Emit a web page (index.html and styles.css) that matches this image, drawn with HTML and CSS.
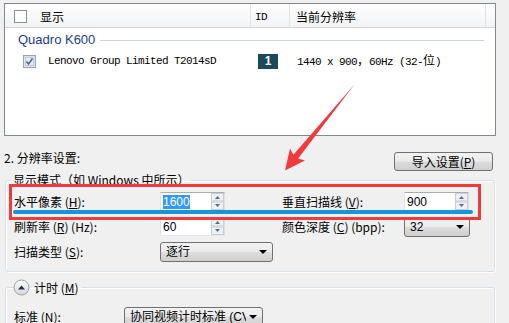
FILE: index.html
```html
<!DOCTYPE html>
<html>
<head>
<meta charset="utf-8">
<link rel="stylesheet" href="styles.css">
</head>
<body>
<div class="page">
  <div class="list">
    <div class="list-head">
      <div class="hcol c1"><span class="cb"></span><span class="htext">显示</span></div>
      <div class="hcol c2"><span class="mono">ID</span></div>
      <div class="hcol c3">当前分辨率</div>
      <div class="hcol c4"></div>
    </div>
    <div class="group"><span class="gname">Quadro K600</span><span class="gline"></span></div>
    <div class="row">
      <div class="c1 rc1">
        <svg class="cbx" width="13" height="13" viewBox="0 0 13 13"><rect x="0.5" y="0.5" width="12" height="12" fill="#dfe5ee" stroke="#9aa3b2"/><rect x="2.5" y="2.5" width="8" height="8" fill="#e9edf3" stroke="#c3cad6"/><path d="M3.5 6.5 L5.5 9 L9.5 3.5" fill="none" stroke="#4a64a0" stroke-width="1.6"/></svg>
        <span class="mono">Lenovo Group Limited T2014sD</span>
      </div>
      <div class="c2 rc2"><span class="badge">1</span></div>
      <div class="c3 rc3"><span class="mono">1440 x 900</span><span>，</span><span class="mono">60Hz (32-</span><span>位</span><span class="mono">)</span></div>
    </div>
  </div>

  <div class="sec2">
    <span class="sec2-label">2. 分辨率设置:</span>
    <div class="btn">导入设置(<u>P</u>)</div>
  </div>

  <fieldset class="box box1">
    <legend class="lg1">显示模式（如 Windows 中所示）</legend>
    <div class="grid">
      <div class="lbl">水平像素 (<u>H</u>):</div>
      <div class="spin"><span class="val"><span class="hl">1600</span></span><span class="arr"><svg width="13" height="17" viewBox="0 0 13 17"><rect x="0.5" y="0.5" width="12" height="7.5" fill="#eef0f3" stroke="#c9ccd2"/><rect x="0.5" y="9" width="12" height="7.5" fill="#eef0f3" stroke="#c9ccd2"/><path d="M4 6 L6.5 3 L9 6 Z" fill="#5a6c8c"/><path d="M4 11 L6.5 14 L9 11 Z" fill="#5a6c8c"/></svg></span></div>
      <div class="lbl">垂直扫描线 (<u>V</u>):</div>
      <div class="spin"><span class="val">900</span><span class="arr"><svg width="13" height="17" viewBox="0 0 13 17"><rect x="0.5" y="0.5" width="12" height="7.5" fill="#eef0f3" stroke="#c9ccd2"/><rect x="0.5" y="9" width="12" height="7.5" fill="#eef0f3" stroke="#c9ccd2"/><path d="M4 6 L6.5 3 L9 6 Z" fill="#5a6c8c"/><path d="M4 11 L6.5 14 L9 11 Z" fill="#5a6c8c"/></svg></span></div>

      <div class="lbl">刷新率 (<u>R</u>) (Hz):</div>
      <div class="spin"><span class="val">60</span><span class="arr"><svg width="13" height="17" viewBox="0 0 13 17"><rect x="0.5" y="0.5" width="12" height="7.5" fill="#eef0f3" stroke="#c9ccd2"/><rect x="0.5" y="9" width="12" height="7.5" fill="#eef0f3" stroke="#c9ccd2"/><path d="M4 6 L6.5 3 L9 6 Z" fill="#5a6c8c"/><path d="M4 11 L6.5 14 L9 11 Z" fill="#5a6c8c"/></svg></span></div>
      <div class="lbl">颜色深度 (<u>C</u>) (bpp):</div>
      <div class="sel"><span class="sval">32</span><span class="caret"></span></div>

      <div class="lbl">扫描类型 (<u>S</u>):</div>
      <div class="sel sel-wide"><span class="sval">逐行</span><span class="caret"></span></div>
    </div>
  </fieldset>

  <fieldset class="box box2">
    <legend class="lg2"><svg class="exp" width="17" height="17" viewBox="0 0 17 17"><defs><linearGradient id="g" x1="0" y1="0" x2="0" y2="1"><stop offset="0" stop-color="#ffffff"/><stop offset="1" stop-color="#d4d6d9"/></linearGradient></defs><circle cx="8.5" cy="8.5" r="7.5" fill="url(#g)" stroke="#9a9ea4"/><path d="M5 10.5 L8.5 6.5 L12 10.5 Z" fill="#1f2f4f"/></svg><span>计时 (<u>M</u>)</span></legend>
    <div class="frow">
      <div class="lbl lbl2">标准 (<u>N</u>):</div>
      <div class="sel sel-std"><span class="sval">协同视频计时标准 (CV</span><span class="caret"></span></div>
    </div>
  </fieldset>

  <svg class="arrow" width="509" height="323" viewBox="0 0 509 323"><polygon points="354.6,84.2 298.2,158.6 305,160.5 285,170.5 290,148.5 293.4,154.8" fill="#ef3b3b"/></svg>
  <div class="redbox"></div>
  <div class="blueline"></div>
</div>
</body>
</html>
```
FILE: styles.css
```css
html, body { margin: 0; padding: 0; }
body {
  background: #f0f0f0;
  width: 509px;
  height: 323px;
  overflow: hidden;
  font-family: "Noto Sans CJK SC", "Liberation Sans", sans-serif;
  font-size: 12px;
  line-height: 14px;
  color: #000;
}
.page { position: relative; width: 509px; height: 323px; overflow: hidden; }
.mono { font-family: "Liberation Mono", "DejaVu Sans Mono", monospace; font-size: 11px; letter-spacing: -0.6px; }

.list {
  margin: 3px 0 0 4px;
  width: 492px;
  height: 133px;
  box-sizing: border-box;
  border: 1px solid #828790;
  background: #fff;
}
.list-head {
  display: flex;
  height: 23px;
  background: linear-gradient(#ffffff, #f2f3f5);
  border-bottom: 1px solid #d5d5d5;
}
.hcol { display: flex; align-items: center; box-sizing: border-box; border-right: 1px solid #e2e4e8; padding-top: 2px; }
.c1 { width: 246px; }
.c2 { width: 39px; }
.c3 { width: 196px; }
.c4 { flex: 1; border-right: none; }
.list-head .c1 { padding-left: 9px; }
.list-head .c2 { padding-left: 4px; }
.list-head .c3 { padding-left: 6px; }
.cb { width: 13px; height: 13px; box-sizing: border-box; border: 1px solid #8e8f8f; background: #fff; }
.htext { margin-left: 13px; }

.group { display: flex; align-items: center; margin-top: 5px; padding-left: 13px; height: 14px; }
.gname { font-family: "Liberation Sans", sans-serif; font-size: 13px; color: #213b8f; }
.gline { flex: 1; height: 1px; background: #cbd3dc; margin: 0 11px 0 5px; }

.row { display: flex; align-items: center; margin-top: 6px; height: 16px; }
.rc1 { display: flex; align-items: center; padding-left: 18px; box-sizing: border-box; }
.cbx { margin-right: 12px; }
.rc2 { padding-left: 7px; box-sizing: border-box; display: flex; }
.rc3 { padding-left: 7px; box-sizing: border-box; white-space: nowrap; }
.badge {
  width: 20px; height: 15px; background: #1c4a5c; color: #fff;
  font-family: "Liberation Sans", sans-serif; font-weight: bold; font-size: 12px;
  display: flex; align-items: center; justify-content: center;
}

.sec2 { display: flex; justify-content: space-between; align-items: flex-start; margin: 16px 16px 0 4px; height: 19px; }
.sec2-label { margin-top: -1px; }
.btn, .sel {
  box-sizing: border-box;
  border: 1px solid #707070;
  border-radius: 3px;
  background: linear-gradient(#f2f2f2 0%, #ebebeb 48%, #dddddd 52%, #cfcfcf 100%);
}
.btn { width: 99px; height: 19px; display: flex; align-items: center; justify-content: center; }

.box {
  margin: 2px 14px 0 5px;
  padding: 5px 8px 9px 8px;
  border: 1px solid #d5dfe5;
  border-radius: 3px;
  box-shadow: inset 1px 1px 0 #ffffff, 1px 1px 0 #ffffff;
  min-width: 0;
}
.lg1 { padding: 0 2px; margin-left: -3px; line-height: 14px; }
.grid {
  display: grid;
  grid-template-columns: 146px 122px 122px 66px;
  grid-template-rows: 19px 19px 20px;
  row-gap: 6px;
  align-items: center;
}
.lbl { white-space: nowrap; }
.spin {
  box-sizing: border-box;
  width: 65px; height: 19px;
  border: 1px solid #abadb3;
  border-color: #abadb3 #dbdfe6 #e3e9ef #e2e3ea;
  background: #fff;
  display: flex; align-items: center; justify-content: space-between;
  font-family: "Liberation Sans", sans-serif; font-size: 12px;
}
.val { padding-left: 2px; }
.hl { background: #3399ff; color: #fff; }
.arr { display: flex; margin-right: 0; }
.sel { height: 20px; width: 66px; display: flex; align-items: center; justify-content: space-between; padding: 0 5px 0 5px; font-family: "Liberation Sans", "Noto Sans CJK SC", sans-serif; }
.sval { white-space: nowrap; overflow: hidden; flex: 1; min-width: 0; }
.sel-wide { width: 113px; }
.caret { flex: none; width: 0; height: 0; margin-left: 3px; border-left: 4px solid transparent; border-right: 4px solid transparent; border-top: 4px solid #000; }

.box2 { margin-top: 7px; padding: 11px 8px 10px 8px; }
.lg2 { display: flex; align-items: center; padding: 0 3px 0 0; margin-left: -1px; }
.exp { margin-right: 4px; }
.frow { display: grid; grid-template-columns: 110px 139px; align-items: center; }
.sel-std { width: 139px; height: 20px; }

.arrow { position: absolute; left: 0; top: 0; pointer-events: none; }
.redbox {
  position: absolute; left: 9px; top: 184px; width: 472px; height: 36px;
  box-sizing: border-box; border: 3px solid #ef3b3b; pointer-events: none;
}
.blueline {
  position: absolute; left: 13px; top: 210px; width: 460px; height: 4px;
  background: #1596d8; border-radius: 2px; pointer-events: none;
}
```
